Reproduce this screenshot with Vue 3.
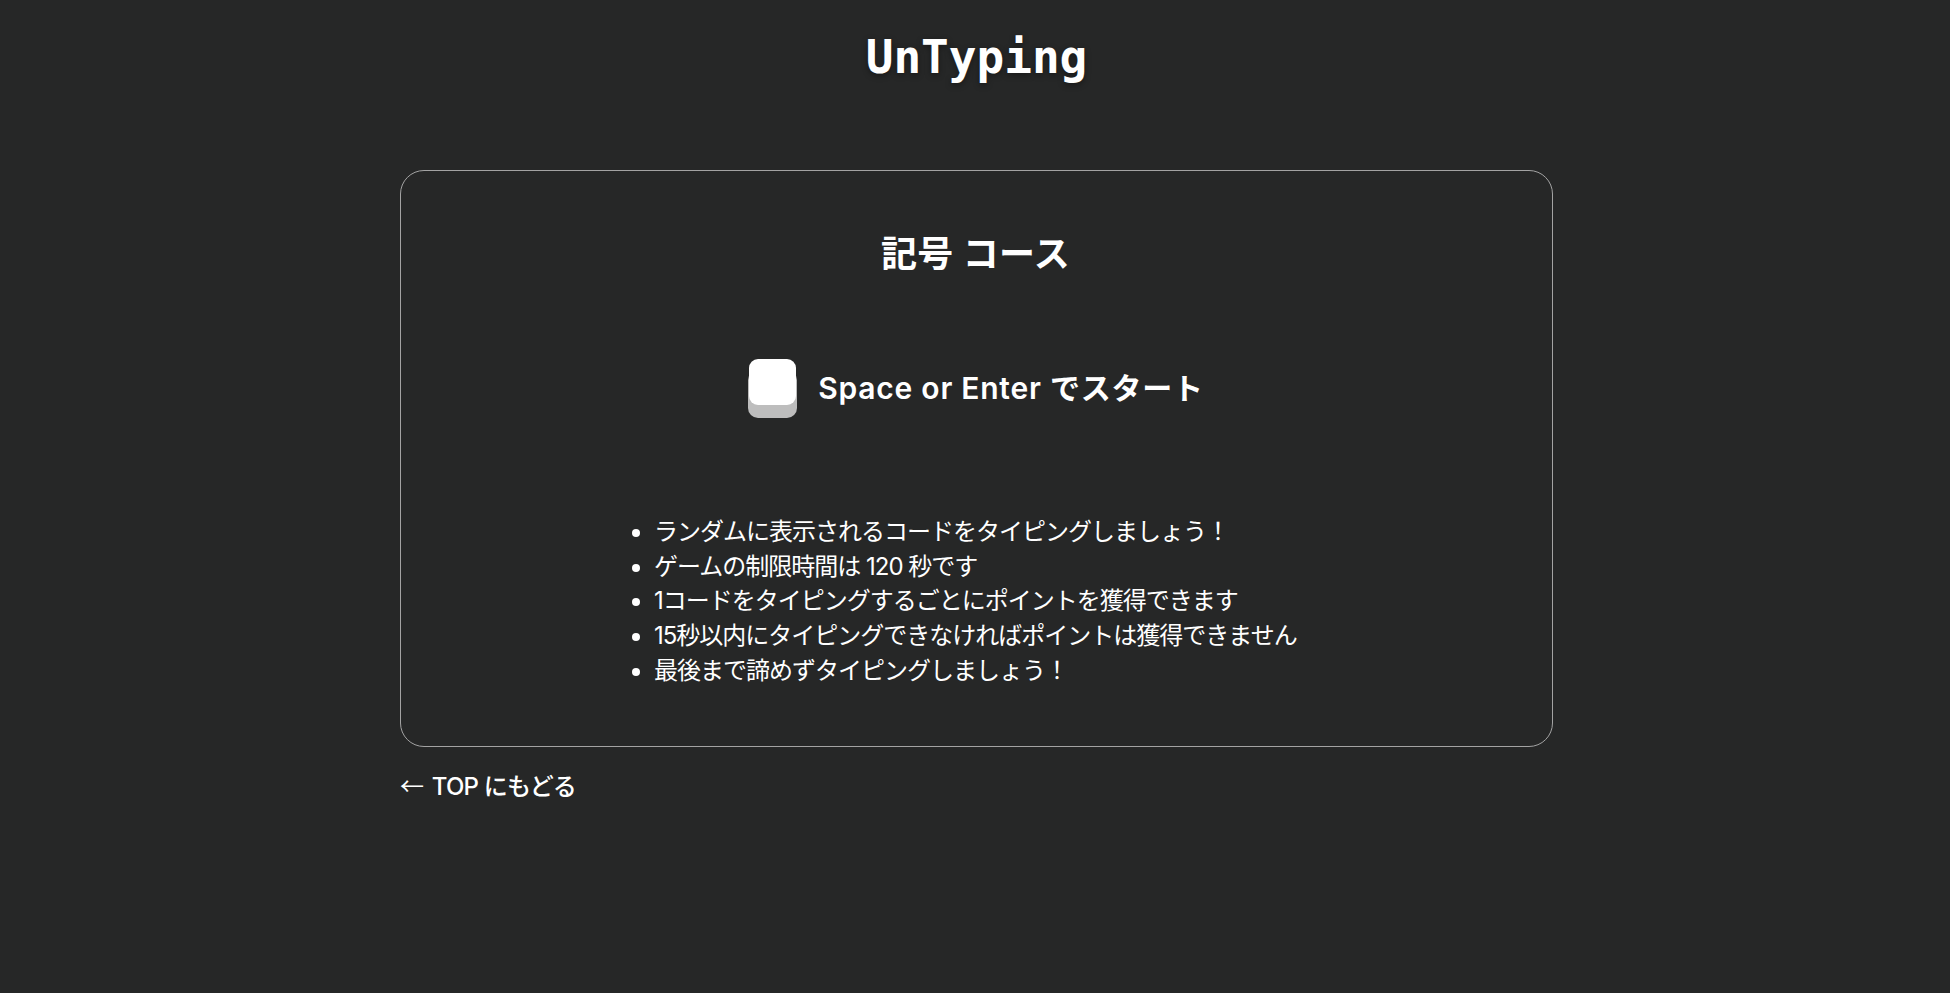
<script setup>
const rules = [
  'ランダムに表示されるコードをタイピングしましょう！',
  'ゲームの制限時間は 120 秒です',
  '1コードをタイピングするごとにポイントを獲得できます',
  '15秒以内にタイピングできなければポイントは獲得できません',
  '最後まで諦めずタイピングしましょう！'
]
</script>

<template>
  <div class="page">
    <header class="header">
      <h1 class="logo">UnTyping</h1>
    </header>
    <main class="main">
      <section class="card">
        <h2 class="course">記号 コース</h2>
        <div class="start">
          <span class="key"></span>
          <span class="start-text">Space or Enter でスタート</span>
        </div>
        <ul class="rules">
          <li v-for="rule in rules" :key="rule">{{ rule }}</li>
        </ul>
      </section>
      <a class="back" href="#"><span class="arrow">←</span> TOP にもどる</a>
    </main>
  </div>
</template>

<style>
html,
body {
  background: #262727;
}
</style>

<style scoped>
.page {
  min-height: 993px;
  background: #262727;
  color: #fff;
  font-family: Inter, 'Noto Sans CJK JP', sans-serif;
}

.header {
  display: flex;
  justify-content: center;
  padding: 25px 0 0 3px;
  height: 170px;
  box-sizing: border-box;
}

.logo {
  margin: 0;
  font-family: 'DejaVu Sans Mono', monospace;
  font-size: 46px;
  line-height: 64px;
  font-weight: 700;
  text-shadow: 0 2px 6px rgba(0, 0, 0, 0.4);
}

.main {
  width: 1153px;
  margin-left: 400px;
}

.card {
  box-sizing: border-box;
  height: 577px;
  border: 1px solid #a3a3a3;
  border-radius: 24px;
  padding-top: 58px;
}

.course {
  margin: 0 0 0 -2px;
  text-align: center;
  font-size: 36px;
  line-height: 50px;
  font-weight: 700;
  letter-spacing: 0.4px;
}

.start {
  display: flex;
  justify-content: center;
  align-items: center;
  gap: 22px;
  margin-top: 79px;
  height: 60px;
}

.key {
  width: 47px;
  height: 46px;
  margin-bottom: 13px;
  background: #fff;
  border-radius: 9px;
  box-shadow: 0 12px 0 1px #bdbdbd;
}

.start-text {
  font-size: 30px;
  line-height: 40px;
  font-weight: 600;
  letter-spacing: 0.75px;
}

.rules {
  width: 680px;
  margin: 97px 0 0 225px;
  padding: 0 0 0 28px;
  box-sizing: border-box;
  font-size: 24px;
  line-height: 34.7px;
  letter-spacing: -1px;
}

.back {
  display: block;
  margin-top: 22px;
  color: #fff;
  text-decoration: none;
  font-size: 24px;
  line-height: 32px;
  font-weight: 500;
  letter-spacing: -0.8px;
}

.arrow {
  margin-right: 3px;
  font-family: 'Noto Sans CJK JP', sans-serif;
  font-weight: 400;
}
</style>
